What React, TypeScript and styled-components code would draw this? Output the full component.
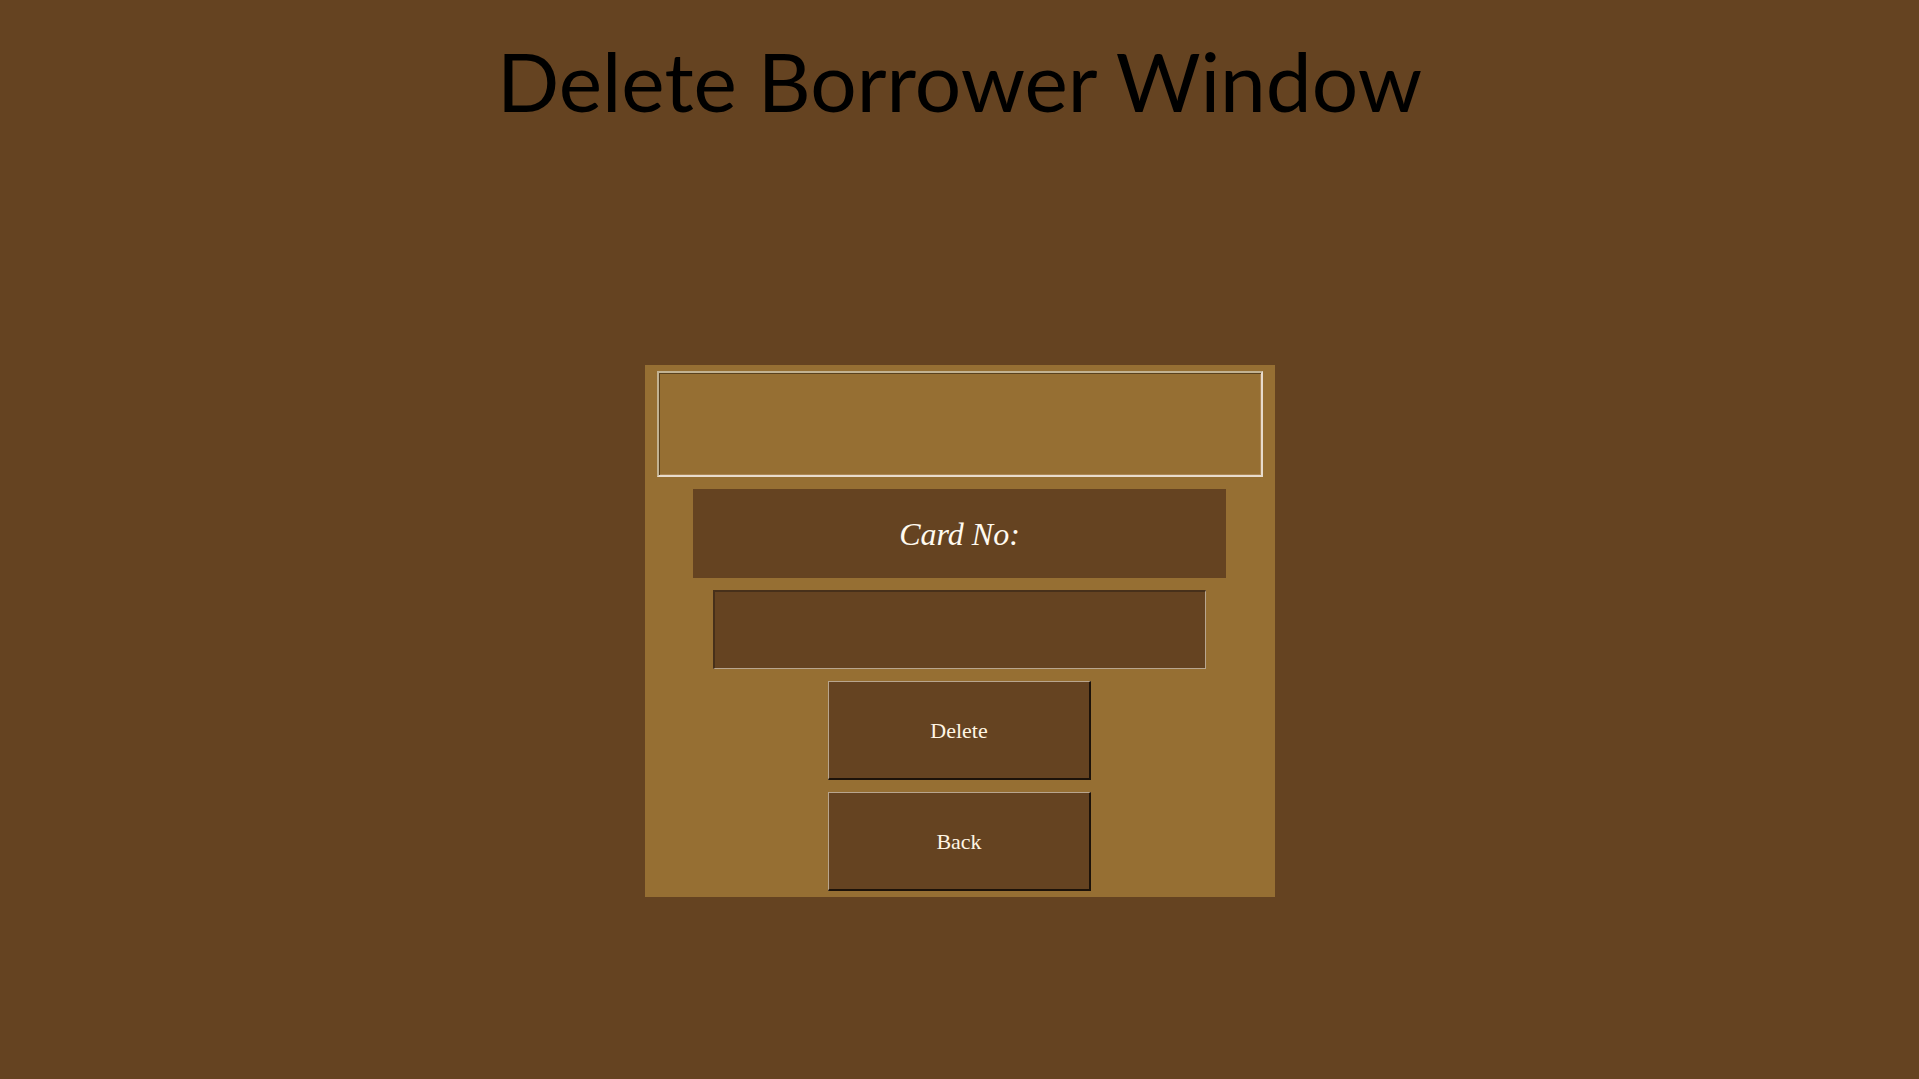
import React, { useState } from 'react';
import styled, { createGlobalStyle } from 'styled-components';

const wood = '#654321';
const brass = '#966f33';

const GlobalStyle = createGlobalStyle`
  *, *::before, *::after { box-sizing: border-box; }
  body { margin: 0; background: ${wood}; }
`;

const Page = styled.main`
  display: flex;
  flex-direction: column;
  align-items: center;
  gap: 237px;
  min-height: 100vh;
  padding: 32px 24px;
  font-family: Gabriola, "Liberation Serif", serif;
`;

const Title = styled.h1`
  margin: 0;
  color: #000;
  font: 400 82px/96px Papyrus, Lato, sans-serif;
  text-align: center;
`;

const Panel = styled.form`
  display: flex;
  flex-direction: column;
  align-items: center;
  gap: 12px;
  width: 100%;
  max-width: 630px;
  padding: 6px 12px;
  background: ${brass};
`;

const Message = styled.output`
  width: 100%;
  height: 106px;
  border: 2px solid;
  border-color: #c2b292 #e8dccd #e8dccd #c2b292;
  box-shadow: inset 1px 1px #59411d, inset -1px -1px #ad8753;
`;

const CardLabel = styled.label`
  display: flex;
  align-items: center;
  justify-content: center;
  width: 88%;
  height: 89px;
  padding-top: 2px;
  background: ${wood};
  color: #fffaf0;
  font-size: 32px;
  font-style: italic;
`;

const CardInput = styled.input`
  width: 493px;
  max-width: 100%;
  height: 79px;
  padding: 0 12px;
  border: solid;
  border-width: 2px 1px 1px 2px;
  border-color: #47301a #b8a58e #b8a58e #47301a;
  border-radius: 0;
  outline: none;
  background: ${wood};
  color: #fffaf0;
  font: italic 32px "Liberation Serif", serif;
`;

const Button = styled.button`
  width: 263px;
  height: 99px;
  padding: 2px 0 0;
  border: solid;
  border-width: 1px 2px 2px 1px;
  border-color: #b8a58e #1c1209 #1c1209 #b8a58e;
  border-radius: 0;
  background: ${wood};
  color: #fff5e4;
  font: 22px Gabriola, "Liberation Serif", serif;
`;

export default function App() {
  const [cardNo, setCardNo] = useState('');
  return (
    <>
      <GlobalStyle />
      <Page>
        <Title>Delete Borrower Window</Title>
        <Panel onSubmit={(e: React.FormEvent) => e.preventDefault()}>
          <Message htmlFor="card-no" />
          <CardLabel htmlFor="card-no">Card No:</CardLabel>
          <CardInput
            id="card-no"
            value={cardNo}
            onChange={(e: React.ChangeEvent<HTMLInputElement>) => setCardNo(e.target.value)}
          />
          <Button type="submit">Delete</Button>
          <Button type="button">Back</Button>
        </Panel>
      </Page>
    </>
  );
}
